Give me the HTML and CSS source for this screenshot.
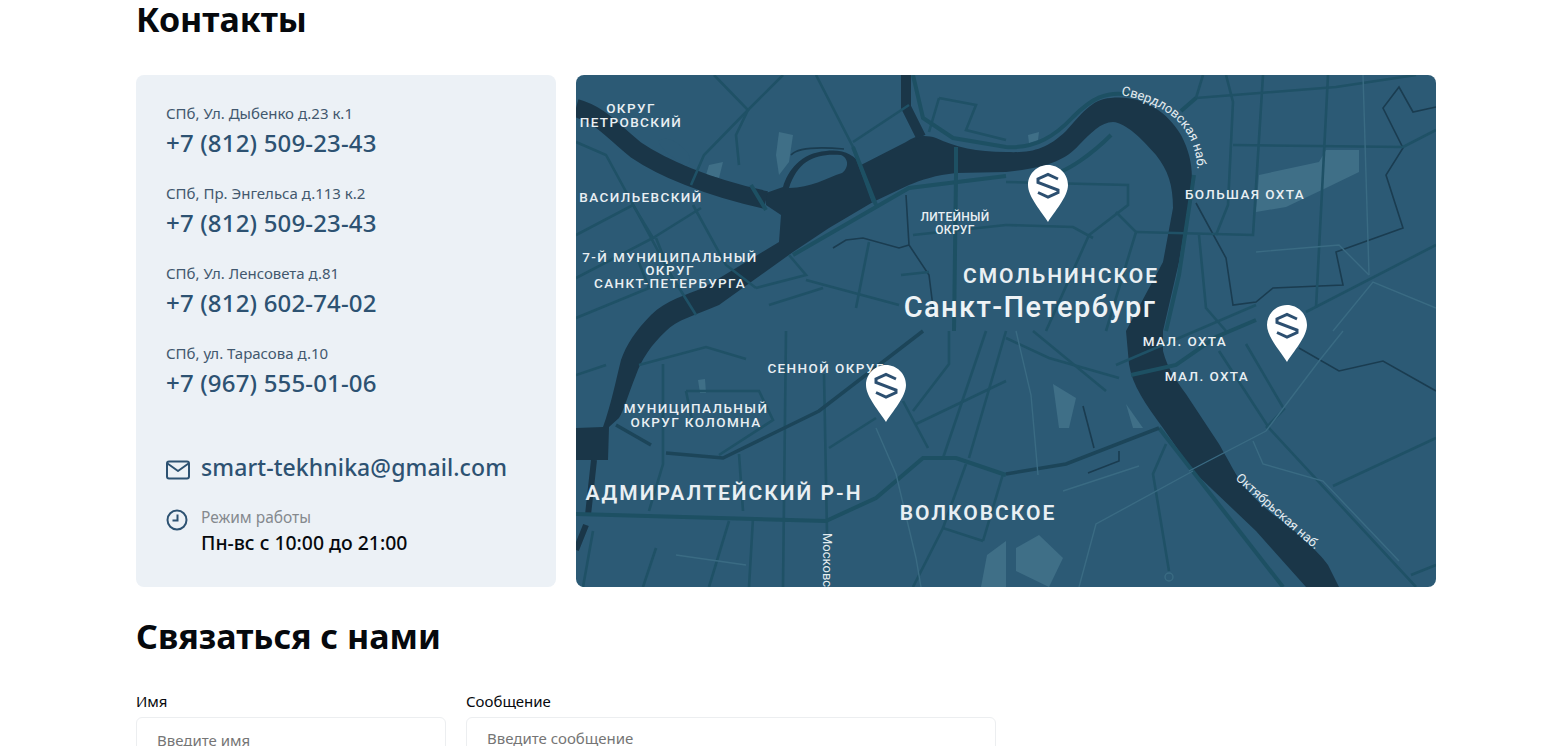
FILE: index.html
```html
<html>
  <head>
    <title>Контакты</title>
    <link rel="stylesheet" href="styles.css">
  </head>
  <body>
    <div class="page">
      <h1 class="title">Контакты</h1>
      <div class="contacts">
        <div class="info">
          <div class="office">
            <div class="address">СПб, Ул. Дыбенко д.23 к.1</div>
            <a class="phone">+7 (812) 509-23-43</a>
          </div>
          <div class="office">
            <div class="address">СПб, Пр. Энгельса д.113 к.2</div>
            <a class="phone">+7 (812) 509-23-43</a>
          </div>
          <div class="office">
            <div class="address">СПб, Ул. Ленсовета д.81</div>
            <a class="phone">+7 (812) 602-74-02</a>
          </div>
          <div class="office">
            <div class="address">СПб, ул. Тарасова д.10</div>
            <a class="phone">+7 (967) 555-01-06</a>
          </div>
          <div class="email">
            <svg class="icon icon-mail" width="24" height="20" viewBox="0 0 24 20" fill="none" stroke="#2d5272" stroke-width="2" stroke-linejoin="round">
              <rect x="1" y="1.5" width="22" height="17" rx="2"/>
              <path d="M1.5 3.5 L12 11 L22.5 3.5"/>
            </svg>
            <a class="email-link">smart-tekhnika@gmail.com</a>
          </div>
          <div class="hours">
            <svg class="icon" width="24" height="24" viewBox="0 0 24 24" fill="none" stroke="#2d5272" stroke-width="2">
              <circle cx="11" cy="12" r="9.5"/>
              <path d="M11.5 6.5 V12.5 H6.5"/>
            </svg>
            <div>
              <div class="hours-label">Режим работы</div>
              <div class="hours-value">Пн-вс с 10:00 до 21:00</div>
            </div>
          </div>
        </div>
        <div class="map">
          <svg class="map-svg" width="860" height="512" viewBox="0 0 860 512">
            <defs>
              <g id="pin">
                <path d="M20 0 C31 0 40 9 40 20 C40 32 26 47 20 57 C14 47 0 32 0 20 C0 9 9 0 20 0Z" fill="#fff"/>
                <path d="M30 14 L20 9.5 L10 14 L10 17.5 L30 25 L30 27.5 L20 32 L10 27.5" fill="none" stroke="#2c4f70" stroke-width="3"/>
              </g>
              <path id="sverdlovskaya" d="M545 20 C575 26 600 38 612 60 C620 75 622 88 622 110"/>
              <path id="oktyabrskaya" d="M659 404 C690 432 720 458 752 486"/>
            </defs>

            <!-- parks -->
            <g class="park">
              <path d="M683 100 L743 87 L750 75 L783 75 L783 97 L750 113 L710 132 L680 137Z"/>
              <path d="M203 57 L217 60 L213 87 L203 100 L200 80Z"/>
              <path d="M133 90 L147 87 L143 103 L130 100Z"/>
              <path d="M477 309 L500 323 L493 353 L483 353Z"/>
              <path d="M440 473 L463 460 L487 483 L473 512 L440 496Z"/>
              <path d="M550 329 L567 353 L557 353Z"/>
              <path d="M452 60 L463 57 L462 65 L453 68Z"/>
              <path d="M411 480 L430 466 L430 512 L405 512Z"/>
              <path d="M122 305 L129 304 L130 318 L124 318Z"/>
            </g>

            <!-- water -->
            <g class="water">
              <path d="M190 118 L207 112 C212 95 225 78 250 76 C268 74 278 80 285 90 L330 67 C340 60 350 60 360 63 C380 72 400 77 430 77 C455 78 470 75 490 56 C505 40 515 24 535 23 C565 20 590 35 605 60 C618 85 618 105 612 133 L603 187 L587 256 L587 276 C592 295 600 305 610 319 L643 369 C655 390 660 400 667 410 C680 425 690 435 705 445 C730 465 745 480 752 490 L763 512 L730 512 L680 456 L617 396 L587 353 C570 330 556 310 553 289 L550 256 L587 187 L597 133 C597 110 592 95 580 80 C565 63 550 48 537 47 C525 47 515 58 503 70 C490 85 470 93 430 97 L380 98 C360 100 345 105 333 110 L297 127 L253 153 L217 177 L143 230 C120 240 100 245 90 256 C75 270 65 285 60 300 C52 320 48 335 43 343 L33 352 L32 385 L0 385 L0 353 L27 352 C35 330 40 305 45 285 C50 270 60 255 75 240 C90 225 110 220 127 213 L203 167 L205 140 L190 130Z"/>
            </g>
            <path class="land" d="M213 113 C222 85 240 78 265 80 C274 84 272 94 266 98 C250 103 235 113 213 113Z"/>
            <g class="river-line">
              <path class="arm" d="M0 33 C25 40 35 55 60 75 C85 92 130 112 190 125"/>
              <path class="channel" d="M330 0 L330 32 L345 62"/>
              <path class="branch" d="M18 385 L12 440 M10 450 L0 475"/>
            </g>
            <path class="land" d="M82 66 C90 60 102 66 112 78 C116 86 112 92 108 90 C100 84 88 78 82 66Z"/>

            <!-- thin canals -->
            <g class="canal">
              <path d="M620 128 L650 183 L657 230 L680 227 L697 213 L767 210 L760 177 L827 153 L810 100 L827 73 L807 33 L823 12 L837 37 L860 32"/>
              <path d="M257 173 L270 165 L287 163 L323 173 L333 170"/>
              <path d="M330 120 L333 170 L353 200 L358 240"/>
              <path d="M723 273 L763 296 L807 286 L860 316"/>
              <path d="M512 398 L543 386 L543 376"/>
              <path d="M507 331 L518 373"/>
              <path d="M215 80 C222 72 245 72 268 74"/>
            </g>

            <!-- streets -->
            <g class="road">
              <path d="M138 0 L172 35 L128 80 L115 110"/>
              <path d="M172 35 L207 0"/>
              <path d="M172 35 L160 60 L163 90"/>
              <path d="M240 0 L277 72 L297 127"/>
              <path d="M277 67 L333 30"/>
              <path d="M363 23 L353 57"/>
              <path d="M363 23 L400 30 L390 55 L430 65"/>
              <path d="M0 67 L30 80 L60 135 L95 200 L120 240"/>
              <path d="M0 160 L57 130 L77 163 L0 203"/>
              <path d="M77 163 L125 133"/>
              <path d="M117 130 L150 190 L180 213"/>
              <path d="M80 163 L100 213"/>
              <path d="M213 180 L230 200 L180 213"/>
              <path d="M230 205 L323 230"/>
              <path d="M293 167 L280 233"/>
              <path d="M193 230 L247 213"/>
              <path d="M337 160 L430 150"/>
              <path d="M0 243 L73 213 L60 180"/>
              <path d="M325 200 L353 197"/>
              <path d="M430 107 L552 110 L552 130 L513 160 L470 256"/>
              <path d="M430 150 L497 152 L517 163"/>
              <path d="M540 137 L560 157 L530 256"/>
              <path d="M560 157 L677 160 L687 0"/>
              <path d="M650 0 L657 27 L652 130 L640 160"/>
              <path d="M620 23 L760 12 L840 0"/>
              <path d="M620 23 L627 0"/>
              <path d="M657 70 L827 72"/>
              <path d="M752 0 L740 233"/>
              <path d="M623 160 L630 233 L650 256"/>
              <path d="M730 237 L860 170"/>
              <path d="M827 72 L860 55"/>
              <path d="M210 256 L207 512"/>
              <path d="M248 299 L252 512"/>
              <path d="M87 289 L87 389 L73 436"/>
              <path d="M163 379 L167 436"/>
              <path d="M110 316 L183 316 L197 345 L143 380"/>
              <path d="M110 316 L117 350"/>
              <path d="M327 326 L352 373"/>
              <path d="M253 373 L300 343"/>
              <path d="M337 336 L373 289 L373 256"/>
              <path d="M340 349 L430 306"/>
              <path d="M367 383 L410 256"/>
              <path d="M393 383 L430 256"/>
              <path d="M337 512 L367 453 L407 466"/>
              <path d="M367 453 L390 389"/>
              <path d="M407 466 L427 399"/>
              <path d="M177 443 L173 512"/>
              <path d="M153 446 L133 512"/>
              <path d="M80 473 L67 512"/>
              <path d="M17 456 L7 512"/>
              <path d="M0 300 L30 290"/>
              <path d="M63 290 L130 272 L170 284"/>
              <path d="M643 276 L693 353 L840 512"/>
              <path d="M670 269 L708 334 L690 353"/>
              <path d="M590 369 L577 399 L593 496"/>
              <path d="M757 411 L860 363"/>
              <path d="M430 263 L473 283 L543 303"/>
              <path d="M457 256 L530 316"/>
              <path d="M540 290 L680 230"/>
              <path d="M860 490 L835 500"/>
            </g>

            <!-- wide streets and embankments -->
            <g class="road-wide">
              <path d="M337 0 L347 43 L377 63 L430 72 C460 74 480 60 497 42 C515 24 530 15 555 20"/>
              <path d="M380 72 L380 100"/>
              <path d="M430 101 L333 113 L217 180"/>
              <path d="M0 439 L250 446 L300 423 L347 383 L380 383 L430 400"/>
              <path d="M618 100 L603 200 L590 256"/>
              <path d="M583 353 L707 512"/>
              <path d="M380 100 L378 256"/>
              <path d="M620 23 L605 36"/>
              <path d="M175 110 L190 135 M277 72 L300 130"/>
              <path d="M470 100 C490 100 520 75 535 60"/>
              <path d="M555 300 L600 290 L640 262 L680 245"/>
            </g>
            <g class="road-dark">
              <path d="M90 378 L147 383 L243 336 L347 256"/>
              <path d="M430 399 L490 389 L583 353"/>
              <path d="M40 350 L75 370"/>
            </g>

            <!-- light lines -->
            <g class="rail">
              <path d="M787 0 L793 200"/>
              <path d="M680 177 L763 170 L793 200"/>
              <path d="M860 233 L797 207 L757 256"/>
              <path d="M300 353 L320 399 L340 483 L345 512"/>
              <path d="M613 396 L690 356 L743 286 L767 256"/>
              <path d="M487 416 L563 391"/>
              <path d="M503 512 L520 449 L617 396"/>
              <path d="M677 366 L687 389 L747 406 L823 486"/>
              <path d="M100 480 L170 490"/>
              <path d="M440 256 L455 320 L462 400"/>
              <circle cx="593" cy="502" r="4"/>
            </g>

            <!-- labels -->
            <g class="label">
              <text x="55" y="38">ОКРУГ</text>
              <text x="55" y="52">ПЕТРОВСКИЙ</text>
              <text x="65" y="127">ВАСИЛЬЕВСКИЙ</text>
              <text x="94" y="187">7-Й МУНИЦИПАЛЬНЫЙ</text>
              <text x="94" y="200">ОКРУГ</text>
              <text x="94" y="213">САНКТ-ПЕТЕРБУРГА</text>
              <text x="669" y="124">БОЛЬШАЯ ОХТА</text>
              <text x="609" y="271">МАЛ. ОХТА</text>
              <text x="631" y="306">МАЛ. ОХТА</text>
              <text x="250" y="298">СЕННОЙ ОКРУГ</text>
              <text x="120" y="338">МУНИЦИПАЛЬНЫЙ</text>
              <text x="120" y="352">ОКРУГ КОЛОМНА</text>
            </g>
            <g class="label label-small">
              <text x="379" y="146">ЛИТЕЙНЫЙ</text>
              <text x="379" y="159">ОКРУГ</text>
            </g>
            <g class="label label-big">
              <text x="485" y="208">СМОЛЬНИНСКОЕ</text>
              <text x="148" y="425">АДМИРАЛТЕЙСКИЙ Р-Н</text>
              <text x="402" y="445">ВОЛКОВСКОЕ</text>
            </g>
            <text class="label-city" x="454" y="242">Санкт-Петербург</text>
            <text class="label-street" transform="translate(247 458) rotate(90)">Московс</text>
            <text class="label-street"><textPath href="#sverdlovskaya">Свердловская наб.</textPath></text>
            <text class="label-street"><textPath href="#oktyabrskaya">Октябрьская наб.</textPath></text>

            <use href="#pin" x="452" y="90"/>
            <use href="#pin" x="691" y="230"/>
            <use href="#pin" x="290" y="290"/>
          </svg>
        </div>
      </div>

      <h1 class="title title-form">Связаться с нами</h1>
      <form class="form">
        <div class="field field-name">
          <label class="field-label">Имя</label>
          <input class="field-input" placeholder="Введите имя">
        </div>
        <div class="field field-message">
          <label class="field-label">Сообщение</label>
          <textarea class="field-input field-area" placeholder="Введите сообщение"></textarea>
        </div>
      </form>
    </div>
  </body>
</html>
```

FILE: styles.css
```css
html,
body {
  margin: 0;
  padding: 0;
  height: 746px;
  overflow: hidden;
  background: #fff;
  font-family: "Noto Sans", sans-serif;
}

.page {
  width: 1300px;
  margin-left: 136px;
}

.title {
  margin: 0;
  height: 75px;
  font-size: 34px;
  line-height: 38px;
  font-weight: 700;
  color: #06090d;
}

.title-form {
  height: auto;
  margin: 30px 0 38px 0;
}

.contacts {
  display: flex;
  gap: 20px;
  height: 512px;
}

.info {
  box-sizing: border-box;
  width: 420px;
  padding: 30px;
  border-radius: 8px;
  background-color: #ecf1f6;
}

.office {
  margin-bottom: 26px;
}

.address {
  font-size: 15px;
  line-height: 18px;
  margin: -1px 0 5px 0;
  color: #42586e;
}

.phone {
  display: block;
  font-size: 24px;
  line-height: 32px;
  font-weight: 500;
  letter-spacing: 0.17px;
  color: #2d5272;
}

.email {
  display: flex;
  align-items: center;
  gap: 11px;
  margin-top: 52px;
}

.email-link {
  font-size: 23px;
  line-height: 32px;
  font-weight: 500;
  letter-spacing: 0.1px;
  color: #2d5272;
}

.icon {
  flex-shrink: 0;
}

.icon-mail {
  margin-top: 5px;
}

.hours {
  display: flex;
  gap: 11px;
  margin-top: 25px;
}

.hours-label {
  font-size: 15.5px;
  line-height: 18px;
  margin-bottom: 8px;
  color: #85898e;
}

.hours-value {
  font-size: 19.4px;
  line-height: 18px;
  font-weight: 500;
  color: #06090d;
}

.map {
  width: 860px;
  height: 512px;
  border-radius: 8px;
  overflow: hidden;
  background-color: #2c5a75;
}

.map-svg {
  display: block;
}

.park path {
  fill: #3f6f87;
}

.water path {
  fill: #1a3648;
}

.land {
  fill: #2c5a75;
}

.river-line path {
  fill: none;
  stroke: #1a3648;
}

.river-line .arm {
  stroke-width: 18;
}

.river-line .channel {
  stroke-width: 10;
}

.river-line .branch {
  stroke-width: 6;
}

.canal path {
  fill: none;
  stroke: #1a3c50;
  stroke-width: 1.6;
}

.road path {
  fill: none;
  stroke: #1f5166;
  stroke-width: 2.6;
}

.road-wide path {
  fill: none;
  stroke: #1d5063;
  stroke-width: 4;
}

.road-dark path {
  fill: none;
  stroke: #1c4559;
  stroke-width: 3.5;
}

.rail path,
.rail circle {
  fill: none;
  stroke: #3a6b83;
  stroke-width: 1.4;
}

.label text {
  font-family: Roboto, sans-serif;
  font-size: 13.5px;
  font-weight: 500;
  letter-spacing: 1.4px;
  text-anchor: middle;
  fill: #e9eff3;
}

.label-small text {
  font-size: 12px;
  letter-spacing: 0.3px;
}

.label-big text {
  font-size: 21px;
  font-weight: 600;
  letter-spacing: 2px;
}

.label-city {
  font-family: Roboto, sans-serif;
  font-size: 29px;
  font-weight: 500;
  letter-spacing: 1.4px;
  text-anchor: middle;
  fill: #eef3f6;
}

.label-street {
  font-family: Roboto, sans-serif;
  font-size: 13px;
  fill: #e4ebef;
}

.form {
  display: flex;
  gap: 20px;
}

.field-name {
  width: 310px;
}

.field-message {
  width: 530px;
}

.field-label {
  display: block;
  font-size: 15px;
  line-height: 18px;
  margin: -1px 0 7px 0;
  color: #06090d;
}

.field-input {
  display: block;
  box-sizing: border-box;
  width: 100%;
  height: 46px;
  padding: 13px 20px;
  border: 1px solid #eceef0;
  border-radius: 6px;
  background: #fff;
  font-family: "Noto Sans", sans-serif;
  font-size: 15px;
  line-height: 18px;
  resize: none;
}

.field-area {
  height: 120px;
  padding-top: 11px;
}
```
